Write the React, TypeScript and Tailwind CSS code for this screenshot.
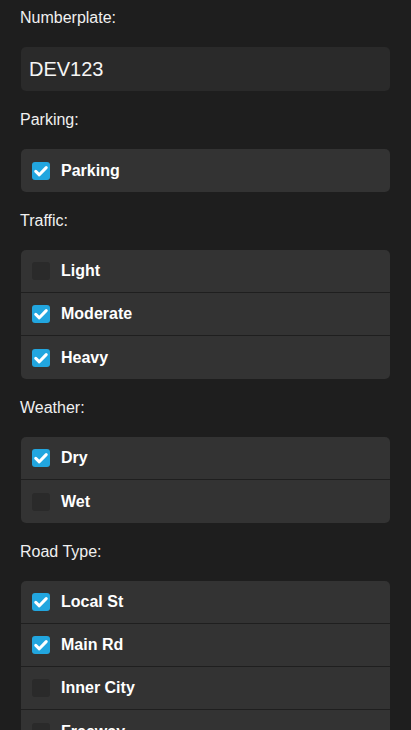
import React from 'react'

type Option = { label: string; checked: boolean }

const SECTIONS: { title: string; options: Option[] }[] = [
  { title: 'Parking:', options: [{ label: 'Parking', checked: true }] },
  {
    title: 'Traffic:',
    options: [
      { label: 'Light', checked: false },
      { label: 'Moderate', checked: true },
      { label: 'Heavy', checked: true },
    ],
  },
  {
    title: 'Weather:',
    options: [
      { label: 'Dry', checked: true },
      { label: 'Wet', checked: false },
    ],
  },
  {
    title: 'Road Type:',
    options: [
      { label: 'Local St', checked: true },
      { label: 'Main Rd', checked: true },
      { label: 'Inner City', checked: false },
      { label: 'Freeway', checked: false },
    ],
  },
]

function Check({ checked }: { checked: boolean }) {
  if (!checked) return <span className="h-[18px] w-[18px] shrink-0 rounded-[3px] bg-[#2a2a2a]" />
  return (
    <span className="flex h-[18px] w-[18px] shrink-0 items-center justify-center rounded-[3px] bg-[#22a6df]">
      <svg width="14" height="14" viewBox="0 0 14 14">
        <path d="M1.8 7.4 L5.3 10.8 L12.2 3.6" fill="none" stroke="#fff" strokeWidth="3" strokeLinecap="round" strokeLinejoin="round" />
      </svg>
    </span>
  )
}

function Label({ children, first }: { children: React.ReactNode; first?: boolean }) {
  return (
    <div className={`${first ? 'pt-[9px]' : 'pt-[20px]'} pb-[20px] text-[16px] leading-[18px] text-[#f0f0f0]`}>
      {children}
    </div>
  )
}

export default function App() {
  return (
    <div className="min-h-[730px] bg-[#1e1e1e] px-[20px] font-['Liberation_Sans',Arial,sans-serif]">
      <Label first>Numberplate:</Label>
      <div className="mx-px flex h-[44px] items-center rounded-[5px] bg-[#2a2a2a] px-[8px] text-[20px] text-[#f5f5f5]">
        DEV123
      </div>

      {SECTIONS.map((s) => (
        <div key={s.title}>
          <Label>{s.title}</Label>
          <div className="mx-px overflow-hidden rounded-[5px] bg-[#333333]">
            {s.options.map((o, i) => (
              <div
                key={o.label}
                className={`flex h-[43px] items-center gap-[11px] px-[11px] ${
                  i < s.options.length - 1 ? 'border-b border-[#1f1f1f]' : ''
                }`}
              >
                <Check checked={o.checked} />
                <span className="text-[16px] font-bold text-white">{o.label}</span>
              </div>
            ))}
          </div>
        </div>
      ))}
      <div className="h-[20px]" />
    </div>
  )
}
